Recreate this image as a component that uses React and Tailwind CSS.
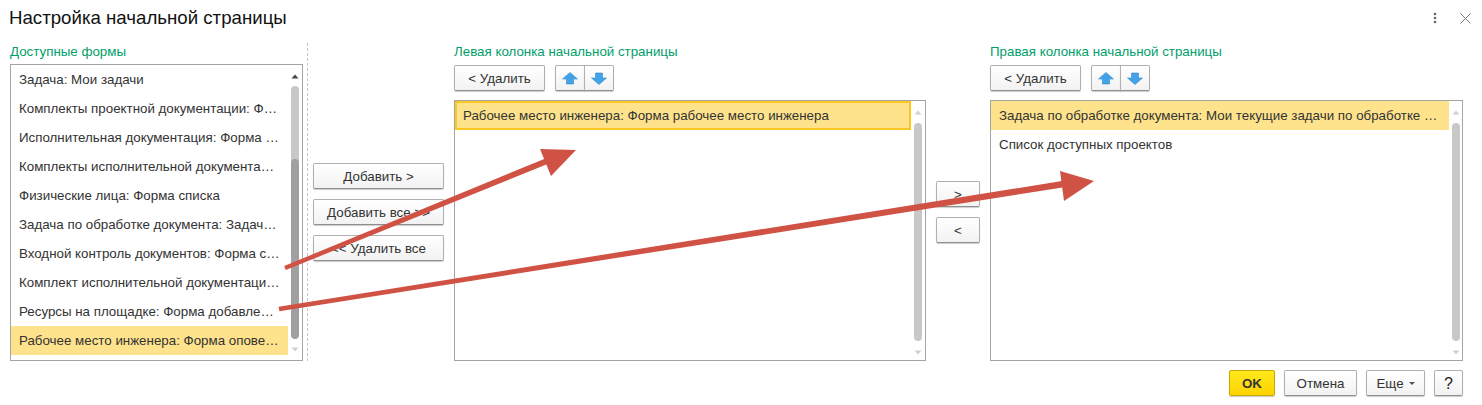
const left = [
  "Задача: Мои задачи",
  "Комплекты проектной документации: Форма списка",
  "Исполнительная документация: Форма списка",
  "Комплекты исполнительной документации: Форма",
  "Физические лица: Форма списка",
  "Задача по обработке документа: Задачи по обработке",
  "Входной контроль документов: Форма списка",
  "Комплект исполнительной документации: Форма",
  "Ресурсы на площадке: Форма добавления ресурсов",
  "Рабочее место инженера: Форма оповещения",
];

const btn =
  "flex items-center justify-center h-[26px] pt-px rounded-[2px] border border-[#b0b0b0] border-b-[#8f8f8f] bg-gradient-to-b from-white to-[#f2f2f2] shadow-[0_1px_1px_rgba(0,0,0,0.2)] text-[13.33px] text-[#333] whitespace-nowrap";

function Label({ children }) {
  return <div className="h-[16px] leading-[16px] pt-px text-[13.33px] text-[#00a06a] whitespace-nowrap">{children}</div>;
}

function Row({ children, sel, focus }) {
  return (
    <div
      className={
        "h-[29px] shrink-0 flex items-center pr-[8px] text-[13.33px] text-[#333] " +
        (sel ? "bg-[#fee38c] " : "") +
        (focus ? "border-2 border-[#fbc823] pl-[6px] " : "pl-[8px] ")
      }
    >
      <span className="block w-full truncate">{children}</span>
    </div>
  );
}

function Scroll({ narrow }) {
  return (
    <div className={(narrow ? "w-[13px]" : "w-[14px]") + " shrink-0 flex flex-col items-start pl-[3px]"}>
      <svg width="8" height="5" viewBox="0 0 8 5" className="mt-[9px] mb-[8px] shrink-0">
        <path d="M4 0.5 L7.5 4.5 L0.5 4.5 Z" fill="#d0d0d0" />
      </svg>
      <div className="flex-1 w-[8px] rounded-[4px] bg-[#c8c8c8]" />
      <svg width="8" height="5" viewBox="0 0 8 5" className="mt-[9px] mb-[5px] shrink-0">
        <path d="M4 4.5 L7.5 0.5 L0.5 0.5 Z" fill="#d0d0d0" />
      </svg>
    </div>
  );
}

function UpDown() {
  return (
    <div className="flex ml-[10px]">
      <div className={btn + " w-[30px] rounded-r-none"}>
        <svg width="16" height="13" viewBox="0 0 16 13">
          <path d="M8 0.5 L15.5 7 L11.5 7 L11.5 12 L4.5 12 L4.5 7 L0.5 7 Z" fill="#43a3e6" stroke="#2f8ccf" strokeWidth="0.6" />
        </svg>
      </div>
      <div className={btn + " w-[30px] -ml-px rounded-l-none"}>
        <svg width="16" height="13" viewBox="0 0 16 13">
          <path d="M8 12.5 L15.5 6 L11.5 6 L11.5 1 L4.5 1 L4.5 6 L0.5 6 Z" fill="#43a3e6" stroke="#2f8ccf" strokeWidth="0.6" />
        </svg>
      </div>
    </div>
  );
}

function Column({ label, w, narrow, children }) {
  return (
    <div className={"flex flex-col shrink-0 " + w}>
      <Label>{label}</Label>
      <div className="flex mt-[6px]">
        <div className={btn + " w-[91px]"}>&lt; Удалить</div>
        <UpDown />
      </div>
      <div className="mt-[9px] h-[261px] flex border border-[#a5a5a5] bg-white">
        <div className="flex-1 min-w-0 flex flex-col">{children}</div>
        <Scroll narrow={narrow} />
      </div>
    </div>
  );
}

export default function App() {
  return (
    <div
      className="relative w-[1482px] h-[405px] bg-white overflow-hidden"
      style={{ fontFamily: '"Liberation Sans", Arial, sans-serif' }}
    >
      <div className="flex items-center justify-between h-[36px] pl-[9px] pr-[11px]">
        <div className="text-[18.67px] leading-[36px] text-[#111] whitespace-nowrap">Настройка начальной страницы</div>
        <div className="flex items-center gap-[23px]">
          <svg width="4" height="12" viewBox="0 0 4 12">
            <circle cx="2" cy="2" r="1.3" fill="#666" />
            <circle cx="2" cy="6" r="1.3" fill="#666" />
            <circle cx="2" cy="10" r="1.3" fill="#666" />
          </svg>
          <svg width="11" height="11" viewBox="0 0 11 11">
            <path d="M0.5 0.5 L10.5 10.5 M10.5 0.5 L0.5 10.5" stroke="#777" strokeWidth="1" fill="none" />
          </svg>
        </div>
      </div>

      <div className="flex pl-[10px] mt-[7px] h-[318px]">
        <div className="w-[293px] shrink-0 flex flex-col">
          <Label>Доступные формы</Label>
          <div className="mt-[5px] h-[297px] flex border border-[#a5a5a5] bg-white">
            <div className="flex-1 min-w-0 flex flex-col">
              {left.map((t, i) => (
                <Row key={t} sel={i === 9}>{t}</Row>
              ))}
            </div>
            <div className="w-[14px] shrink-0 flex flex-col items-center">
              <svg width="8" height="5" viewBox="0 0 8 5" className="mt-[9px] mb-[7px] shrink-0">
                <path d="M4 0.5 L7.5 4.5 L0.5 4.5 Z" fill="#444" />
              </svg>
              <div className="w-[8px] h-[253px] rounded-[4px] bg-[#c8c8c8] overflow-hidden flex flex-col justify-end">
                <div className="w-full h-[180px] rounded-[4px] bg-[#a0a0a0]" />
              </div>
              <svg width="8" height="5" viewBox="0 0 8 5" className="mt-[8px] shrink-0">
                <path d="M4 4.5 L7.5 0.5 L0.5 0.5 Z" fill="#d0d0d0" />
              </svg>
            </div>
          </div>
        </div>

        <div className="ml-[4px] w-0 border-l border-dashed border-[#c4c4c4] shrink-0" />

        <div className="w-[131px] ml-[5px] shrink-0 flex flex-col gap-[10px] pt-[120px]">
          <div className={btn}>Добавить &gt;</div>
          <div className={btn}>Добавить все &gt;&gt;</div>
          <div className={btn}>&lt;&lt; Удалить все</div>
        </div>

        <div className="ml-[10px]">
          <Column label="Левая колонка начальной страницы" w="w-[472px]">
            <Row sel focus>Рабочее место инженера: Форма рабочее место инженера</Row>
          </Column>
        </div>

        <div className="w-[44px] ml-[10px] shrink-0 flex flex-col gap-[10px] pt-[138px]">
          <div className={btn}>&gt;</div>
          <div className={btn}>&lt;</div>
        </div>

        <div className="ml-[10px]">
          <Column label="Правая колонка начальной страницы" w="w-[473px]" narrow>
            <Row sel>Задача по обработке документа: Мои текущие задачи по обработке документов</Row>
            <Row>Список доступных проектов</Row>
          </Column>
        </div>
      </div>

      <div className="flex justify-end items-center gap-[9px] pr-[19px] mt-[9px]">
        <div className="flex items-center justify-center h-[26px] w-[46px] pt-px rounded-[2px] border border-[#c9a800] bg-gradient-to-b from-[#ffe81a] to-[#fdd300] shadow-[0_1px_1px_rgba(0,0,0,0.2)] text-[13.33px] font-bold text-[#333]">OK</div>
        <div className={btn + " w-[73px]"}>Отмена</div>
        <div className={btn + " w-[59px] gap-[5px]"}>
          Еще
          <svg width="6" height="3" viewBox="0 0 6 3"><path d="M0 0 L6 0 L3 3 Z" fill="#555" /></svg>
        </div>
        <div className={btn + " w-[29px] !text-[16px] !text-[#222]"}>?</div>
      </div>

      <svg width="1482" height="405" viewBox="0 0 1482 405" className="absolute left-0 top-0 pointer-events-none">
        <path d="M284.2 266 L285.8 270 L553.1 161.8 L550.9 156.2 Z" fill="#d05244" />
        <path d="M540 149 L576 150 L551 176 Z" fill="#d05244" />
        <path d="M278.6 306.8 L279.4 311.2 L1070.5 186.2 L1069.5 179.8 Z" fill="#d05244" />
        <path d="M1060 171 L1094 181 L1064 201 Z" fill="#d05244" />
      </svg>
    </div>
  );
}
